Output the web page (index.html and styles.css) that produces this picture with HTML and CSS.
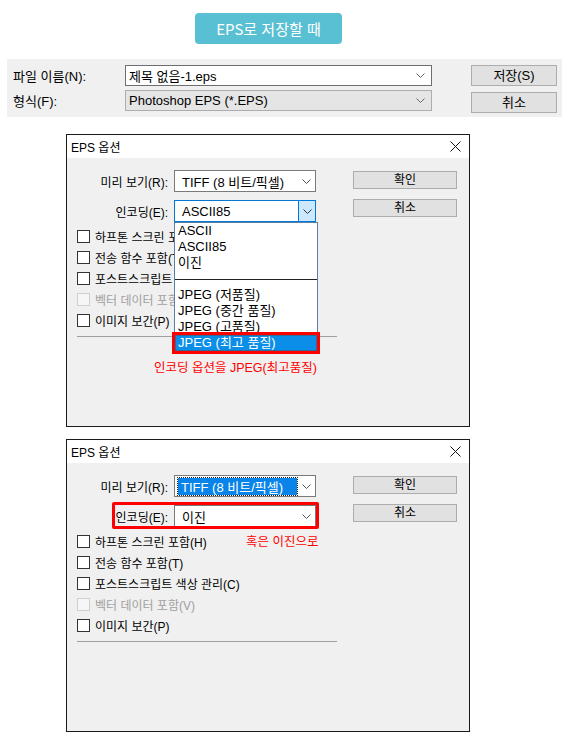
FILE: index.html
```html
<!DOCTYPE html>
<html lang="ko">
<head>
<meta charset="utf-8">
<title>EPS로 저장할 때</title>
<link rel="stylesheet" href="styles.css">
</head>
<body>
<div class="badge">EPS로 저장할 때</div>

<div class="savebar">
  <div class="savefields">
    <div class="srow">
      <span class="slabel">파일 이름(N):</span>
      <div class="field input"><span class="ftext">제목 없음-1.eps</span><svg class="chev" width="9" height="5" viewBox="0 0 9 5"><polyline points="0.5,0.5 4.5,4.5 8.5,0.5" fill="none" stroke="#666" stroke-width="1"/></svg></div>
    </div>
    <div class="srow">
      <span class="slabel">형식(F):</span>
      <div class="field combo"><span class="ftext">Photoshop EPS (*.EPS)</span><svg class="chev" width="9" height="5" viewBox="0 0 9 5"><polyline points="0.5,0.5 4.5,4.5 8.5,0.5" fill="none" stroke="#666" stroke-width="1"/></svg></div>
    </div>
  </div>
  <div class="savebtns">
    <div class="sbtn">저장(S)</div>
    <div class="sbtn">취소</div>
  </div>
</div>

<div class="dialog">
  <div class="titlebar">
    <span class="title">EPS 옵션</span>
    <svg class="close" width="11" height="11" viewBox="0 0 11 11"><path d="M0.5 0.5 L10.5 10.5 M10.5 0.5 L0.5 10.5" stroke="#111" stroke-width="1"/></svg>
  </div>
  <div class="dbody">
    <div class="left">
      <div class="frow">
        <span class="flabel">미리 보기(R):</span>
        <div class="select"><span class="sval">TIFF (8 비트/픽셀)</span><span class="sarrow"><svg width="9" height="5" viewBox="0 0 9 5"><polyline points="0.5,0.5 4.5,4.5 8.5,0.5" fill="none" stroke="#555" stroke-width="1"/></svg></span></div>
      </div>
      <div class="frow">
        <span class="flabel">인코딩(E):</span>
        <div class="selwrap">
          <div class="select focus"><span class="sval">ASCII85</span><span class="sarrow hot"><svg width="9" height="5" viewBox="0 0 9 5"><polyline points="0.5,0.5 4.5,4.5 8.5,0.5" fill="none" stroke="#333" stroke-width="1"/></svg></span></div>
          <div class="dropdown">
            <div class="opt">ASCII</div>
            <div class="opt">ASCII85</div>
            <div class="opt">이진</div>
            <div class="opt sep"></div>
            <div class="opt">JPEG (저품질)</div>
            <div class="opt">JPEG (중간 품질)</div>
            <div class="opt">JPEG (고품질)</div>
            <div class="opt hi">JPEG (최고 품질)</div>
          </div>
        </div>
      </div>
      <div class="checks">
        <div class="chk"><span class="box"></span>하프톤 스크린 포함(H)</div>
        <div class="chk"><span class="box"></span>전송 함수 포함(T)</div>
        <div class="chk"><span class="box"></span>포스트스크립트 색상 관리(C)</div>
        <div class="chk off"><span class="box"></span>벡터 데이터 포함(V)</div>
        <div class="chk"><span class="box"></span>이미지 보간(P)</div>
      </div>
      <div class="rule"></div>
    </div>
    <div class="dbtns">
      <div class="dbtn">확인</div>
      <div class="dbtn">취소</div>
    </div>
  </div>
  <div class="note note1">인코딩 옵션을 JPEG(최고품질)</div>
</div>

<div class="dialog">
  <div class="titlebar">
    <span class="title">EPS 옵션</span>
    <svg class="close" width="11" height="11" viewBox="0 0 11 11"><path d="M0.5 0.5 L10.5 10.5 M10.5 0.5 L0.5 10.5" stroke="#111" stroke-width="1"/></svg>
  </div>
  <div class="dbody">
    <div class="left">
      <div class="frow">
        <span class="flabel">미리 보기(R):</span>
        <div class="select"><span class="sval selected"><span class="seltext">TIFF (8 비트/픽셀)</span></span><span class="sarrow"><svg width="9" height="5" viewBox="0 0 9 5"><polyline points="0.5,0.5 4.5,4.5 8.5,0.5" fill="none" stroke="#555" stroke-width="1"/></svg></span></div>
      </div>
      <div class="frow marked">
        <span class="flabel">인코딩(E):</span>
        <div class="select"><span class="sval">이진</span><span class="sarrow"><svg width="9" height="5" viewBox="0 0 9 5"><polyline points="0.5,0.5 4.5,4.5 8.5,0.5" fill="none" stroke="#555" stroke-width="1"/></svg></span></div>
        <span class="redbox"></span>
      </div>
      <div class="checks">
        <div class="chk"><span class="box"></span>하프톤 스크린 포함(H)</div>
        <div class="chk"><span class="box"></span>전송 함수 포함(T)</div>
        <div class="chk"><span class="box"></span>포스트스크립트 색상 관리(C)</div>
        <div class="chk off"><span class="box"></span>벡터 데이터 포함(V)</div>
        <div class="chk"><span class="box"></span>이미지 보간(P)</div>
      </div>
      <div class="rule"></div>
    </div>
    <div class="dbtns">
      <div class="dbtn">확인</div>
      <div class="dbtn">취소</div>
    </div>
  </div>
  <div class="note note2">혹은 이진으로</div>
</div>
</body>
</html>
```

FILE: styles.css
```css
* { box-sizing: border-box; }
html, body { margin: 0; padding: 0; background: #fff; }
body {
  width: 567px;
  height: 743px;
  overflow: hidden;
  font-family: "Liberation Sans", "Noto Sans CJK KR", sans-serif;
  color: #000;
}

.badge {
  margin: 13px 0 0 195px;
  width: 147px;
  height: 31px;
  border-radius: 4px;
  background: #59bfd3;
  color: #fff;
  font-family: "Noto Sans CJK KR", sans-serif;
  font-size: 15px;
  line-height: 31px;
  text-align: center;
}

/* save bar */
.savebar {
  margin: 15px 0 0 7px;
  width: 555px;
  height: 58px;
  background: #f0f0f0;
  display: flex;
  padding: 6px 0 0 6px;
  font-size: 13px;
}
.savefields { display: flex; flex-direction: column; gap: 4px; }
.srow { display: flex; align-items: center; height: 21px; }
.slabel { width: 112px; }
.field {
  width: 307px;
  height: 21px;
  display: flex;
  align-items: center;
  padding: 0 6px 0 3px;
}
.field.input { background: #fff; border: 1px solid #6e6e6e; }
.field.combo { background: #e5e5e5; border: 1px solid #adadad; }
.ftext { flex: 1; }
.chev { display: block; }
.savebtns { margin-left: 39px; display: flex; flex-direction: column; gap: 6px; }
.sbtn {
  width: 86px;
  height: 21px;
  background: #e1e1e1;
  border: 1px solid #adadad;
  text-align: center;
  line-height: 19px;
  font-size: 13px;
}

/* dialogs */
.dialog {
  position: relative;
  margin: 17px 0 0 66px;
  width: 404px;
  height: 293px;
  border: 1px solid #1a1a1a;
  background: #f0f0f0;
  font-size: 12px;
}
.dialog + .dialog { margin-top: 12px; }
.titlebar {
  height: 23px;
  background: #fff;
  display: flex;
  align-items: center;
  justify-content: space-between;
  padding: 0 8px 0 4px;
}
.title { font-size: 12px; }
.close { display: block; }
.dbody { display: flex; padding: 12px 0 0 10px; }
.left { width: 260px; }
.frow { position: relative; display: flex; align-items: center; height: 22px; }
.frow + .frow { margin-top: 8px; }
.flabel { width: 91px; margin-right: 6px; text-align: right; }
.selwrap { position: relative; }
.select {
  width: 142px;
  height: 22px;
  background: #fff;
  border: 1px solid #7a7a7a;
  display: flex;
  align-items: stretch;
  font-size: 13px;
}
.select.focus { border-color: #0078d7; }
.sval { flex: 1; display: flex; align-items: center; padding-left: 7px; }
.sval.selected { padding: 2px 1px 1px 3px; }
.seltext {
  flex: 1;
  height: 100%;
  display: flex;
  align-items: center;
  padding-left: 3px;
  background: #0a84e8;
  color: #fff;
  outline: 1px dotted #222;
}
.sarrow { width: 17px; display: flex; align-items: center; justify-content: center; }
.sarrow svg { display: block; }
.sarrow.hot { background: #cce8ff; border-left: 1px solid #0078d7; }

.dropdown {
  position: absolute;
  left: 0;
  top: 100%;
  width: 144px;
  background: #fff;
  border: 1px solid #5a7fa8;
  z-index: 2;
  font-size: 13px;
}
.opt { height: 16px; line-height: 16px; padding-left: 3px; white-space: nowrap; }
.opt.sep { display: flex; align-items: center; padding: 0; }
.opt.sep::after { content: ""; flex: 1; height: 1px; background: #222; }
.opt.hi {
  background: #0a8ee8;
  color: #fff;
  box-shadow: inset 0 0 0 1px #2f6d98;
  outline: 3px solid #f00;
}

.checks { margin-top: 4px; }
.chk { height: 21px; display: flex; align-items: center; }
.box {
  width: 13px;
  height: 13px;
  border: 1px solid #333;
  background: #fff;
  margin-right: 5px;
}
.chk.off { color: #a0a0a0; }
.chk.off .box { border-color: #cfcfcf; background: #f6f6f6; }
.rule { margin-top: 5px; height: 1px; background: #a0a0a0; }

.dbtns { margin-left: 16px; padding-top: 1px; display: flex; flex-direction: column; gap: 10px; }
.dbtn {
  width: 104px;
  height: 18px;
  background: #e1e1e1;
  border: 1px solid #adadad;
  text-align: center;
  line-height: 16px;
  font-size: 12px;
}

.redbox {
  position: absolute;
  left: 35px;
  top: -3px;
  right: 18px;
  bottom: -2px;
  border: 3px solid #f00;
  border-radius: 2px;
}
.note {
  position: absolute;
  color: #f00;
  font-size: 12.5px;
  line-height: 16px;
  white-space: nowrap;
}
.note1 { left: 87px; top: 225px; }
.note2 { left: 179px; top: 94px; }
```
